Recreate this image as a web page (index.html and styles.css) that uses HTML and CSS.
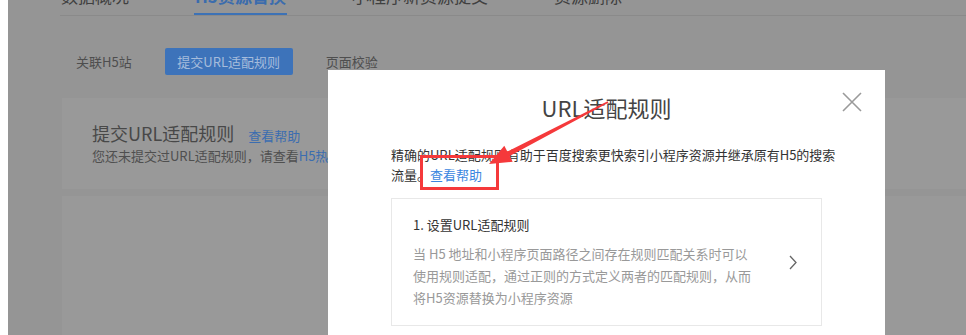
FILE: index.html
```html
<!DOCTYPE html>
<html lang="zh-CN">
<head>
    <meta charset="UTF-8">
    <title>URL适配规则</title>
    <link rel="stylesheet" href="styles.css">
</head>
<body>
    <div class="page">
        <div class="tabs">
            <div class="tab">数据概况</div>
            <div class="tab active">H5资源替换</div>
            <div class="tab">小程序新资源提交</div>
            <div class="tab">资源删除</div>
        </div>
        <div class="subtabs">
            <span class="subtab">关联H5站</span>
            <span class="subtab current">提交URL适配规则</span>
            <span class="subtab">页面校验</span>
        </div>
        <div class="card">
            <div class="card-title">提交URL适配规则 <a class="link">查看帮助</a></div>
            <div class="card-desc">您还未提交过URL适配规则，请查看<a class="link">H5热门页面</a>提交规则</div>
        </div>
        <div class="card card-empty"></div>

        <!-- dialog over the dimmed page -->
        <div class="modal">
            <div class="modal-title">URL适配规则</div>
            <span class="close">
                <svg width="20" height="20" viewBox="0 0 20 20"><path d="M1 1L19 19M19 1L1 19" stroke="#9a9a9a" stroke-width="1.6" fill="none"/></svg>
            </span>
            <p class="intro">精确的URL适配规则有助于百度搜索更快索引小程序资源并继承原有H5的搜索<br>流量。<a class="help">查看帮助</a></p>
            <div class="step">
                <div class="step-body">
                    <div class="step-title">1. 设置URL适配规则</div>
                    <div class="step-desc">当 H5 地址和小程序页面路径之间存在规则匹配关系时可以<br>使用规则适配，通过正则的方式定义两者的匹配规则，从而<br>将H5资源替换为小程序资源</div>
                </div>
                <svg class="chevron" width="8" height="15" viewBox="0 0 8 15"><path d="M1 1L7 7.5L1 14" stroke="#666" stroke-width="1.3" fill="none"/></svg>
            </div>
        </div>
    </div>

    <!-- screenshot annotation -->
    <svg class="mark" width="966" height="335" viewBox="0 0 966 335">
        <rect x="421.5" y="156.5" width="76" height="32" fill="none" stroke="#f5393b" stroke-width="3"/>
        <polygon fill="#f5393b" points="608.4,102.7 607.6,101.3 507.3,151.6 504.3,145.8 489,164 512.7,161.8 509.7,156"/>
    </svg>
</body>
</html>
```

FILE: styles.css
```css
body {
    margin: 0;
    background: #fff;
    font-family: "Noto Sans CJK SC", "Microsoft YaHei", sans-serif;
    overflow: hidden;
}
.page {
    margin-left: 8px;
    height: 335px;
    background: #959595;
    overflow: hidden;
    position: relative;
}
.tabs {
    display: flex;
    gap: 64px;
    margin: -14px 0 0 52px;
    border-bottom: 1px solid #8a8a8a;
}
.tab {
    font-size: 17px;
    line-height: 20px;
    color: #404040;
    padding: 0 1px 7px;
    border-bottom: 2px solid transparent;
}
.tab.active {
    color: #3b6cad;
    font-weight: bold;
    border-bottom-color: #3d72b6;
}
.subtabs {
    display: flex;
    align-items: center;
    gap: 33px;
    margin: 32px 0 0 68px;
}
.subtab {
    font-size: 13px;
    color: #4e4e4e;
}
.subtab.current {
    width: 128px;
    height: 27px;
    line-height: 27px;
    text-align: center;
    background: #3d73ba;
    color: #a5bcdc;
    border-radius: 2px;
}
.card {
    margin: 23px 0 0 54px;
    height: 91px;
    background: #999;
    padding: 24px 30px 0;
    box-sizing: border-box;
}
.card-empty {
    margin-top: 7px;
    height: 200px;
}
.card-title {
    font-size: 18px;
    line-height: 22px;
    color: #484848;
}
.card-title .link {
    font-size: 13px;
    margin-left: 10px;
}
.card-desc {
    font-size: 13px;
    line-height: 18px;
    color: #4f4f4f;
    white-space: nowrap;
}
.link {
    color: #3b6db0;
}

/* modal */
.modal {
    position: absolute;
    left: 320px;
    top: 70px;
    width: 557px;
    height: 300px;
    background: #fff;
    padding: 22px 63px 0;
    box-sizing: border-box;
}
.modal-title {
    font-size: 22px;
    line-height: 30px;
    color: #444;
    text-align: center;
}
.close {
    position: absolute;
    right: 23px;
    top: 22px;
    width: 20px;
    height: 20px;
}
.close svg {
    display: block;
}
.intro {
    margin: 23px 0 0;
    font-size: 13px;
    line-height: 20px;
    color: #333;
    white-space: nowrap;
}
.help {
    color: #3a86e0;
}
.step {
    margin-top: 13px;
    height: 128px;
    border: 1px solid #e8e8e8;
    box-sizing: border-box;
    display: flex;
    align-items: center;
    justify-content: space-between;
    padding: 0 24px 0 21px;
}
.step-title {
    font-size: 13px;
    line-height: 20px;
    color: #333;
}
.step-desc {
    margin-top: 8px;
    font-size: 13px;
    line-height: 22px;
    color: #999;
    white-space: nowrap;
}
.chevron {
    display: block;
}
.mark {
    position: absolute;
    left: 0;
    top: 0;
    pointer-events: none;
}
```
